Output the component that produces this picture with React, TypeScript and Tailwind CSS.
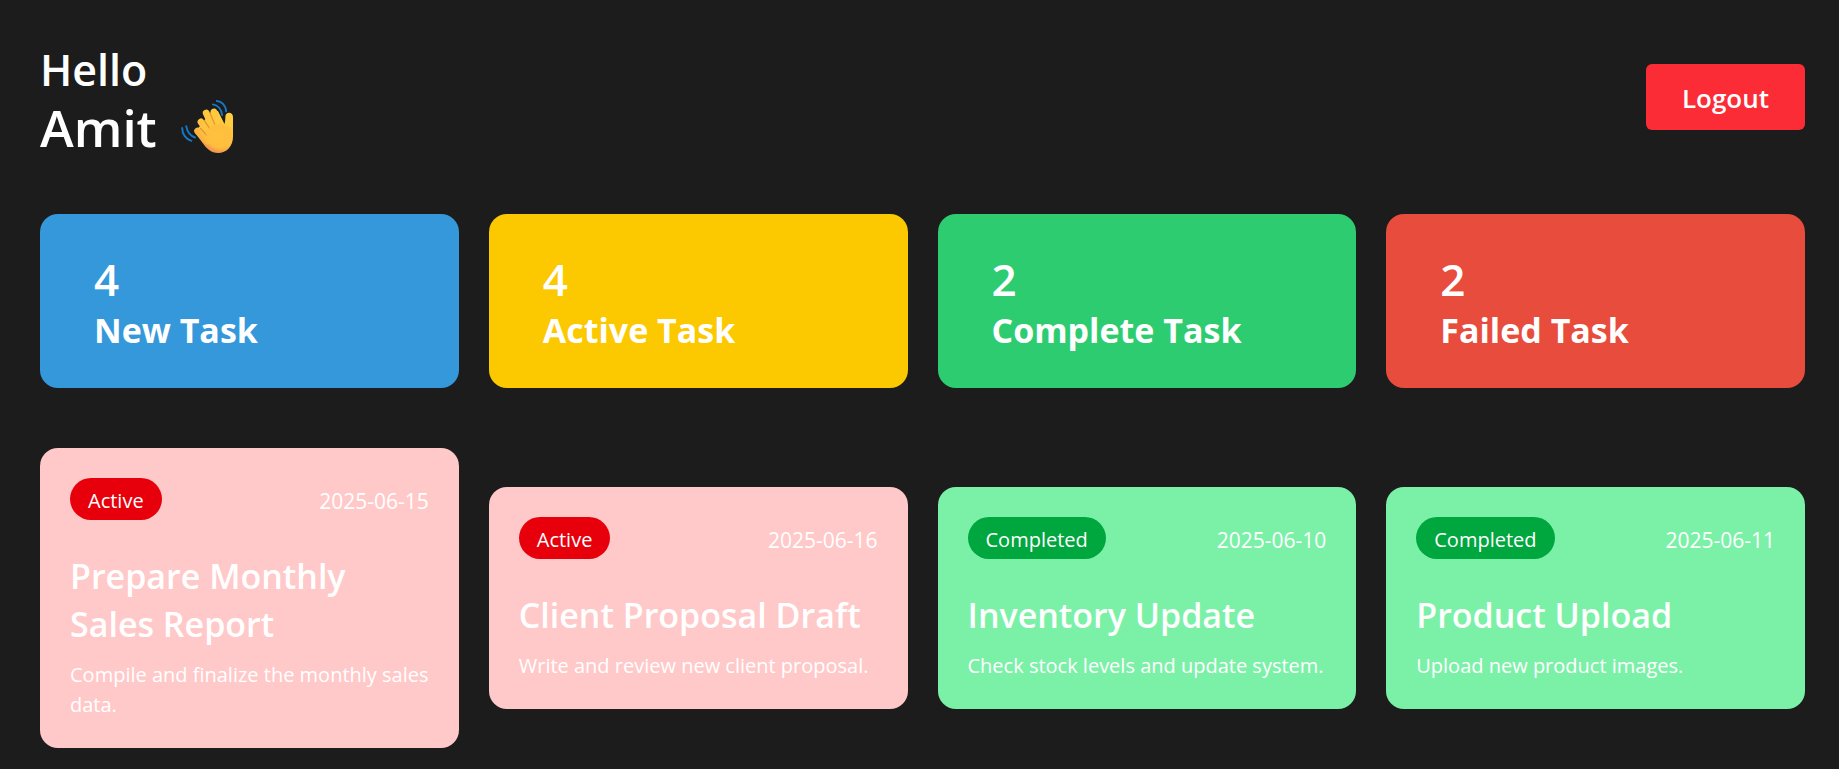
type Stat = { count: number; label: string; color: string };

type Task = {
  status: "Active" | "Completed";
  date: string;
  title: string;
  description: string;
};

const stats: Stat[] = [
  { count: 4, label: "New Task", color: "bg-[#3498db]" },
  { count: 4, label: "Active Task", color: "bg-[#fcc800]" },
  { count: 2, label: "Complete Task", color: "bg-[#2ecc71]" },
  { count: 2, label: "Failed Task", color: "bg-[#e74c3c]" },
];

const tasks: Task[] = [
  {
    status: "Active",
    date: "2025-06-15",
    title: "Prepare Monthly Sales Report",
    description: "Compile and finalize the monthly sales data.",
  },
  {
    status: "Active",
    date: "2025-06-16",
    title: "Client Proposal Draft",
    description: "Write and review new client proposal.",
  },
  {
    status: "Completed",
    date: "2025-06-10",
    title: "Inventory Update",
    description: "Check stock levels and update system.",
  },
  {
    status: "Completed",
    date: "2025-06-11",
    title: "Product Upload",
    description: "Upload new product images.",
  },
];

const cardColor = { Active: "bg-[#ffc9c9]", Completed: "bg-[#7bf1a8]" };
const badgeColor = { Active: "bg-[#e7000b]", Completed: "bg-[#00a63e]" };

function WavingHand() {
  return (
    <svg viewBox="0 0 54 54" className="size-[54px]" role="img" aria-label="Waving hand">
      <defs>
        <linearGradient id="skin" gradientUnits="userSpaceOnUse" x1="44" y1="16" x2="28" y2="52">
          <stop offset="0" stopColor="#ffcf3e" />
          <stop offset="0.65" stopColor="#ffbc3f" />
          <stop offset="1" stopColor="#f0914c" />
        </linearGradient>
        <linearGradient id="finger" gradientUnits="userSpaceOnUse" x1="14" y1="32" x2="34" y2="18">
          <stop offset="0" stopColor="#fbb040" />
          <stop offset="0.35" stopColor="#ffc341" />
          <stop offset="1" stopColor="#ffc93f" />
        </linearGradient>
        <radialGradient id="palm" gradientUnits="userSpaceOnUse" cx="38" cy="36" r="15">
          <stop offset="0" stopColor="#ffc13e" />
          <stop offset="0.7" stopColor="#ffbf3e" />
          <stop offset="1" stopColor="#ffbf3e" stopOpacity="0" />
        </radialGradient>
      </defs>
      <g fill="none" stroke="#1678c6" strokeWidth="1.9" strokeLinecap="round">
        <path d="M35.800 1c5.200 .2 8.900 4.500 9.400 10.300" />
        <path d="M31.900 4.400c5 .6 8.700 4.800 9.200 10.600" />
        <path d="M1.200 28c-.1 6 3.800 11.500 9.200 12.800" />
        <path d="M5.200 26.200c1 5.400 3.800 9.600 8.800 11.300" />
      </g>
      <path
        d="M13.800 32.500 30 12l7-1 6.500 13c.8-2.500 .8-5.500 .9-7.500 .2-5.200 7.600-4.700 7.600 .5v19.500c0 10-6.500 16.500-15 16.500-5.500 0-9-2.800-12.500-6.200z"
        fill="url(#skin)"
      />
      <g fill="none" stroke="url(#finger)" strokeWidth="6.800" strokeLinecap="round">
        <path d="M33 12 40 30" />
        <path d="M25.200 13 34 32" />
        <path d="M20 21.900 31 37" />
        <path d="M16.600 31 26 41" />
      </g>
      <g fill="none" stroke="#d8832c" strokeWidth="1.200" strokeLinecap="round" opacity="0.75">
        <path d="m19.600 28.400 6.400 7.200" />
        <path d="m23.200 20.300 6.300 9.200" />
        <path d="m29.200 13.400 4.600 11" />
      </g>
      <circle cx="38" cy="37" r="14" fill="url(#palm)" />
    </svg>
  );
}

function Header() {
  return (
    <header className="flex items-center justify-between">
      <h1 className="text-[43px]/[60px] font-semibold">
        Hello
        <span className="flex items-center gap-6 text-[51px]/[54px]">
          Amit
          <WavingHand />
        </span>
      </h1>
      <button
        type="button"
        className="rounded-md bg-[#fb2c36] px-9 pt-[13px] pb-[11px] text-[26px]/[42px] font-semibold"
      >
        Logout
      </button>
    </header>
  );
}

function StatCard({ count, label, color }: Stat) {
  return (
    <div className={`rounded-[18px] px-[54px] pt-[38px] pb-[34px] ${color}`}>
      <h2 className="text-[44px]/[54px] font-semibold">{count}</h2>
      <h3 className="text-[34px]/[48px] font-bold">{label}</h3>
    </div>
  );
}

function TaskCard({ status, date, title, description }: Task) {
  return (
    <article className={`rounded-[18px] px-[30px] pt-[30px] pb-7 ${cardColor[status]}`}>
      <div className="flex items-center justify-between leading-[30px]">
        <span className={`rounded-full px-[18px] pt-2 pb-1 text-[20px] ${badgeColor[status]}`}>{status}</span>
        <time dateTime={date} className="pt-1 text-[21px]">
          {date}
        </time>
      </div>
      <h2 className="mt-8 text-[34px]/[48px] font-semibold">{title}</h2>
      <p className="mt-3 text-[20px]/[30px]">{description}</p>
    </article>
  );
}

export default function App() {
  return (
    <main className="flex min-h-screen flex-col gap-[60px] bg-[#1c1c1c] pt-10 pr-[34px] pb-5 pl-10 font-['Open_Sans','Noto_Sans',sans-serif] text-white">
      <Header />
      <section aria-label="Task summary" className="grid grid-cols-4 gap-[30px]">
        {stats.map((stat) => (
          <StatCard key={stat.label} {...stat} />
        ))}
      </section>
      <section aria-label="Tasks" className="grid grid-cols-4 items-center gap-[30px]">
        {tasks.map((task) => (
          <TaskCard key={task.title} {...task} />
        ))}
      </section>
    </main>
  );
}
